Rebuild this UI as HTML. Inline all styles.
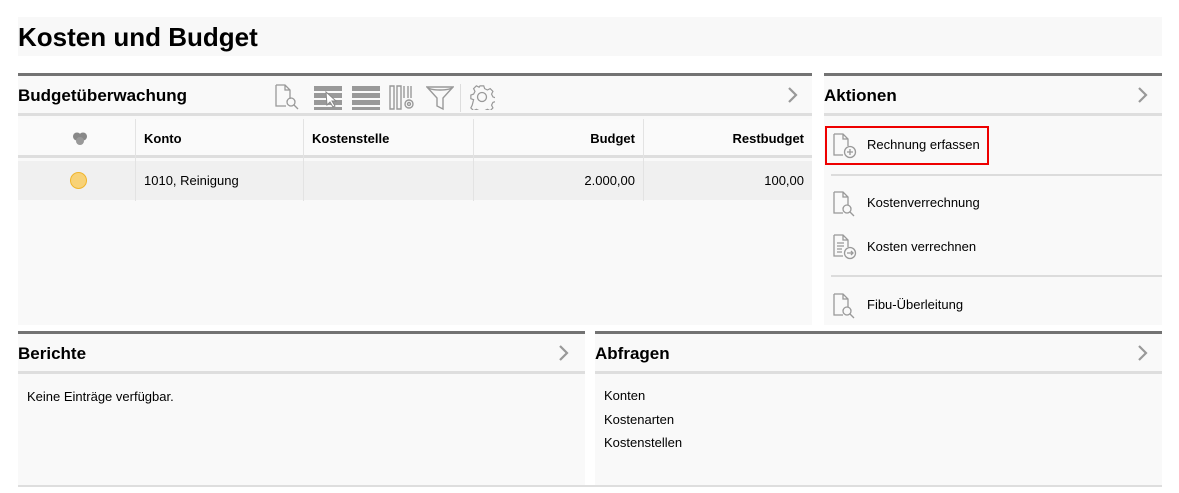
<!DOCTYPE html>
<html><head><meta charset="utf-8"><style>
*{margin:0;padding:0;box-sizing:border-box}
body{width:1179px;height:493px;background:#fff;font-family:"Liberation Sans",Arial,sans-serif;color:#000;position:relative;overflow:hidden;font-size:13px}
.a{position:absolute}
.panel{position:absolute;background:#f9f9f9;border-top:3px solid #737373}
.hd{position:absolute;left:0;right:0;top:0;height:40px;border-bottom:3px solid #dedede}
.hd b{position:absolute;left:0;top:10px;font-size:17px}
.chev{position:absolute;top:10px;right:14px;width:12px;height:18px}
.t{position:absolute;white-space:nowrap}
</style></head><body>
<div class="a" style="left:18px;top:17px;width:1144px;height:39px;background:#f8f8f8"><div class="t" style="left:0;top:5px;font-size:26px;font-weight:bold">Kosten und Budget</div></div>

<!-- Budget -->
<div class="panel" style="left:18px;top:73px;width:794px;height:252px">
 <div class="hd"><b>Budgetüberwachung</b>
  <svg class="chev" viewBox="0 0 12 18"><path d="M3 2l7 7-7 7" fill="none" stroke="#999" stroke-width="2.2"/></svg>
  <svg class="a" style="left:256px;top:8px" width="26" height="26" viewBox="0 0 26 26" fill="none" stroke="#999" stroke-width="1.3"><path d="M2 1h9l5 5v9M2 1v21h10M11 1v5h5"/><circle cx="17" cy="18" r="4"/><path d="M20 21l4 4"/></svg>
  <svg class="a" style="left:296px;top:10px" width="28" height="24"><g fill="#999"><rect x="0" y="0" width="28" height="5"/><rect x="0" y="7" width="28" height="5"/><rect x="0" y="14" width="28" height="5"/><rect x="0" y="21" width="28" height="3"/></g><path d="M12 6l10 9-4 0 3 5-2 1-3-5-3 3z" fill="#fff" stroke="#888"/></svg>
  <svg class="a" style="left:334px;top:10px" width="28" height="24"><g fill="#999"><rect x="0" y="0" width="28" height="5"/><rect x="0" y="7" width="28" height="5"/><rect x="0" y="14" width="28" height="5"/><rect x="0" y="21" width="28" height="3"/></g></svg>
  <svg class="a" style="left:371px;top:9px" width="28" height="26" fill="none" stroke="#999" stroke-width="1.4"><path d="M1 1v23h4V1zM8 1v23h4V1zM15 1v12M22 1v12M19 1v12"/><circle cx="20" cy="19" r="4"/><circle cx="20" cy="19" r="1.5"/></svg>
  <svg class="a" style="left:408px;top:9px" width="28" height="26" fill="none" stroke="#999" stroke-width="1.4"><path d="M1 2h26l-10 11v11l-6-3v-8z"/><path d="M1 2c4 4 22 4 26 0"/></svg>
  <div class="a" style="left:442px;top:8px;width:1px;height:28px;background:#ddd"></div>
  <svg class="a" style="left:451px;top:8px" width="26" height="26" viewBox="0 0 26 26" fill="none" stroke="#999" stroke-width="1.3"><path d="M11 1h4l1 3 3 1.5 3-1.5 3 3-1.5 3 1.5 3 3 1v4l-3 1-1.5 3 1.5 3-3 3-3-1.5-3 1.5-1 3h-4l-1-3-3-1.5-3 1.5-3-3 1.5-3L4 16l-3-1v-4l3-1 1.5-3L4 4l3-3 3 1.5z" transform="scale(.92) translate(1 1)"/><circle cx="13" cy="13" r="4.5"/></svg>
 </div>
 <div class="a" style="left:0;right:0;top:43px;height:39px;background:#fafafa;border-bottom:3px solid #dedede"></div>
 <div class="a" style="left:0;right:0;top:85px;height:39px;background:#f0f0f0"></div>
 <div class="a" style="left:117px;top:43px;width:1px;height:82px;background:#e3e3e3"></div>
 <div class="a" style="left:285px;top:43px;width:1px;height:82px;background:#e3e3e3"></div>
 <div class="a" style="left:455px;top:43px;width:1px;height:82px;background:#e3e3e3"></div>
 <div class="a" style="left:625px;top:43px;width:1px;height:82px;background:#e3e3e3"></div>
 <svg class="a" style="left:54px;top:56px" width="16" height="14"><circle cx="5" cy="4.5" r="4" fill="#888"/><circle cx="11" cy="4.5" r="4" fill="#888"/><circle cx="8" cy="9" r="4" fill="#999"/></svg>
 <div class="t" style="left:126px;top:55px;font-weight:bold">Konto</div>
 <div class="t" style="left:294px;top:55px;font-weight:bold">Kostenstelle</div>
 <div class="t" style="right:177px;top:55px;font-weight:bold">Budget</div>
 <div class="t" style="right:8px;top:55px;font-weight:bold">Restbudget</div>
 <div class="a" style="left:52px;top:96px;width:17px;height:17px;border-radius:50%;background:#f8d277;border:1px solid #f0b52d"></div>
 <div class="t" style="left:126px;top:97px">1010, Reinigung</div>
 <div class="t" style="right:177px;top:97px">2.000,00</div>
 <div class="t" style="right:8px;top:97px">100,00</div>
</div>

<!-- Aktionen -->
<div class="panel" style="left:824px;top:73px;width:338px;height:252px">
 <div class="hd"><b>Aktionen</b><svg class="chev" style="right:14px" viewBox="0 0 12 18"><path d="M3 2l7 7-7 7" fill="none" stroke="#999" stroke-width="2.2"/></svg></div>
 <div class="a" style="left:1px;top:50px;width:164px;height:39px;border:2px solid #e00"></div>
 <svg class="a" style="left:8px;top:57px" width="26" height="26" fill="none" stroke="#999" stroke-width="1.3"><path d="M2 1h9l5 5v7M2 1v21h9M11 1v5h5"/><circle cx="18" cy="19" r="5.5"/><path d="M18 16v6M15 19h6"/></svg>
 <div class="t" style="left:43px;top:61px">Rechnung erfassen</div>
 <div class="a" style="left:7px;top:98px;width:331px;height:2px;background:#dcdcdc"></div>
 <svg class="a" style="left:8px;top:115px" width="26" height="26" fill="none" stroke="#999" stroke-width="1.3"><path d="M2 1h9l5 5v8M2 1v21h9M11 1v5h5"/><circle cx="15" cy="18" r="4"/><path d="M18 21l4 4"/></svg>
 <div class="t" style="left:43px;top:119px">Kostenverrechnung</div>
 <svg class="a" style="left:8px;top:158px" width="26" height="26" fill="none" stroke="#999" stroke-width="1.3"><path d="M2 1h9l5 5v7M2 1v21h9M11 1v5h5M5 9h7M5 12h7M5 15h5M5 18h5"/><circle cx="18" cy="19" r="5.5"/><path d="M15 19h6M19 17l2 2-2 2"/></svg>
 <div class="t" style="left:43px;top:163px">Kosten verrechnen</div>
 <div class="a" style="left:7px;top:199px;width:331px;height:2px;background:#dcdcdc"></div>
 <svg class="a" style="left:8px;top:217px" width="26" height="26" fill="none" stroke="#999" stroke-width="1.3"><path d="M2 1h9l5 5v8M2 1v21h9M11 1v5h5"/><circle cx="15" cy="18" r="4"/><path d="M18 21l4 4"/></svg>
 <div class="t" style="left:43px;top:221px">Fibu-Überleitung</div>
</div>

<!-- Berichte -->
<div class="panel" style="left:18px;top:331px;width:567px;height:154px">
 <div class="hd"><b>Berichte</b><svg class="chev" style="right:16px" viewBox="0 0 12 18"><path d="M3 2l7 7-7 7" fill="none" stroke="#999" stroke-width="2.2"/></svg></div>
 <div class="t" style="left:9px;top:55px">Keine Einträge verfügbar.</div>
</div>
<div class="panel" style="left:595px;top:331px;width:567px;height:154px">
 <div class="hd"><b>Abfragen</b><svg class="chev" style="right:14px" viewBox="0 0 12 18"><path d="M3 2l7 7-7 7" fill="none" stroke="#999" stroke-width="2.2"/></svg></div>
 <div class="t" style="left:9px;top:54px">Konten</div>
 <div class="t" style="left:9px;top:78px">Kostenarten</div>
 <div class="t" style="left:9px;top:101px">Kostenstellen</div>
</div>
<div class="a" style="left:18px;top:485px;width:1144px;height:2px;background:#dedede"></div>
</body></html>
